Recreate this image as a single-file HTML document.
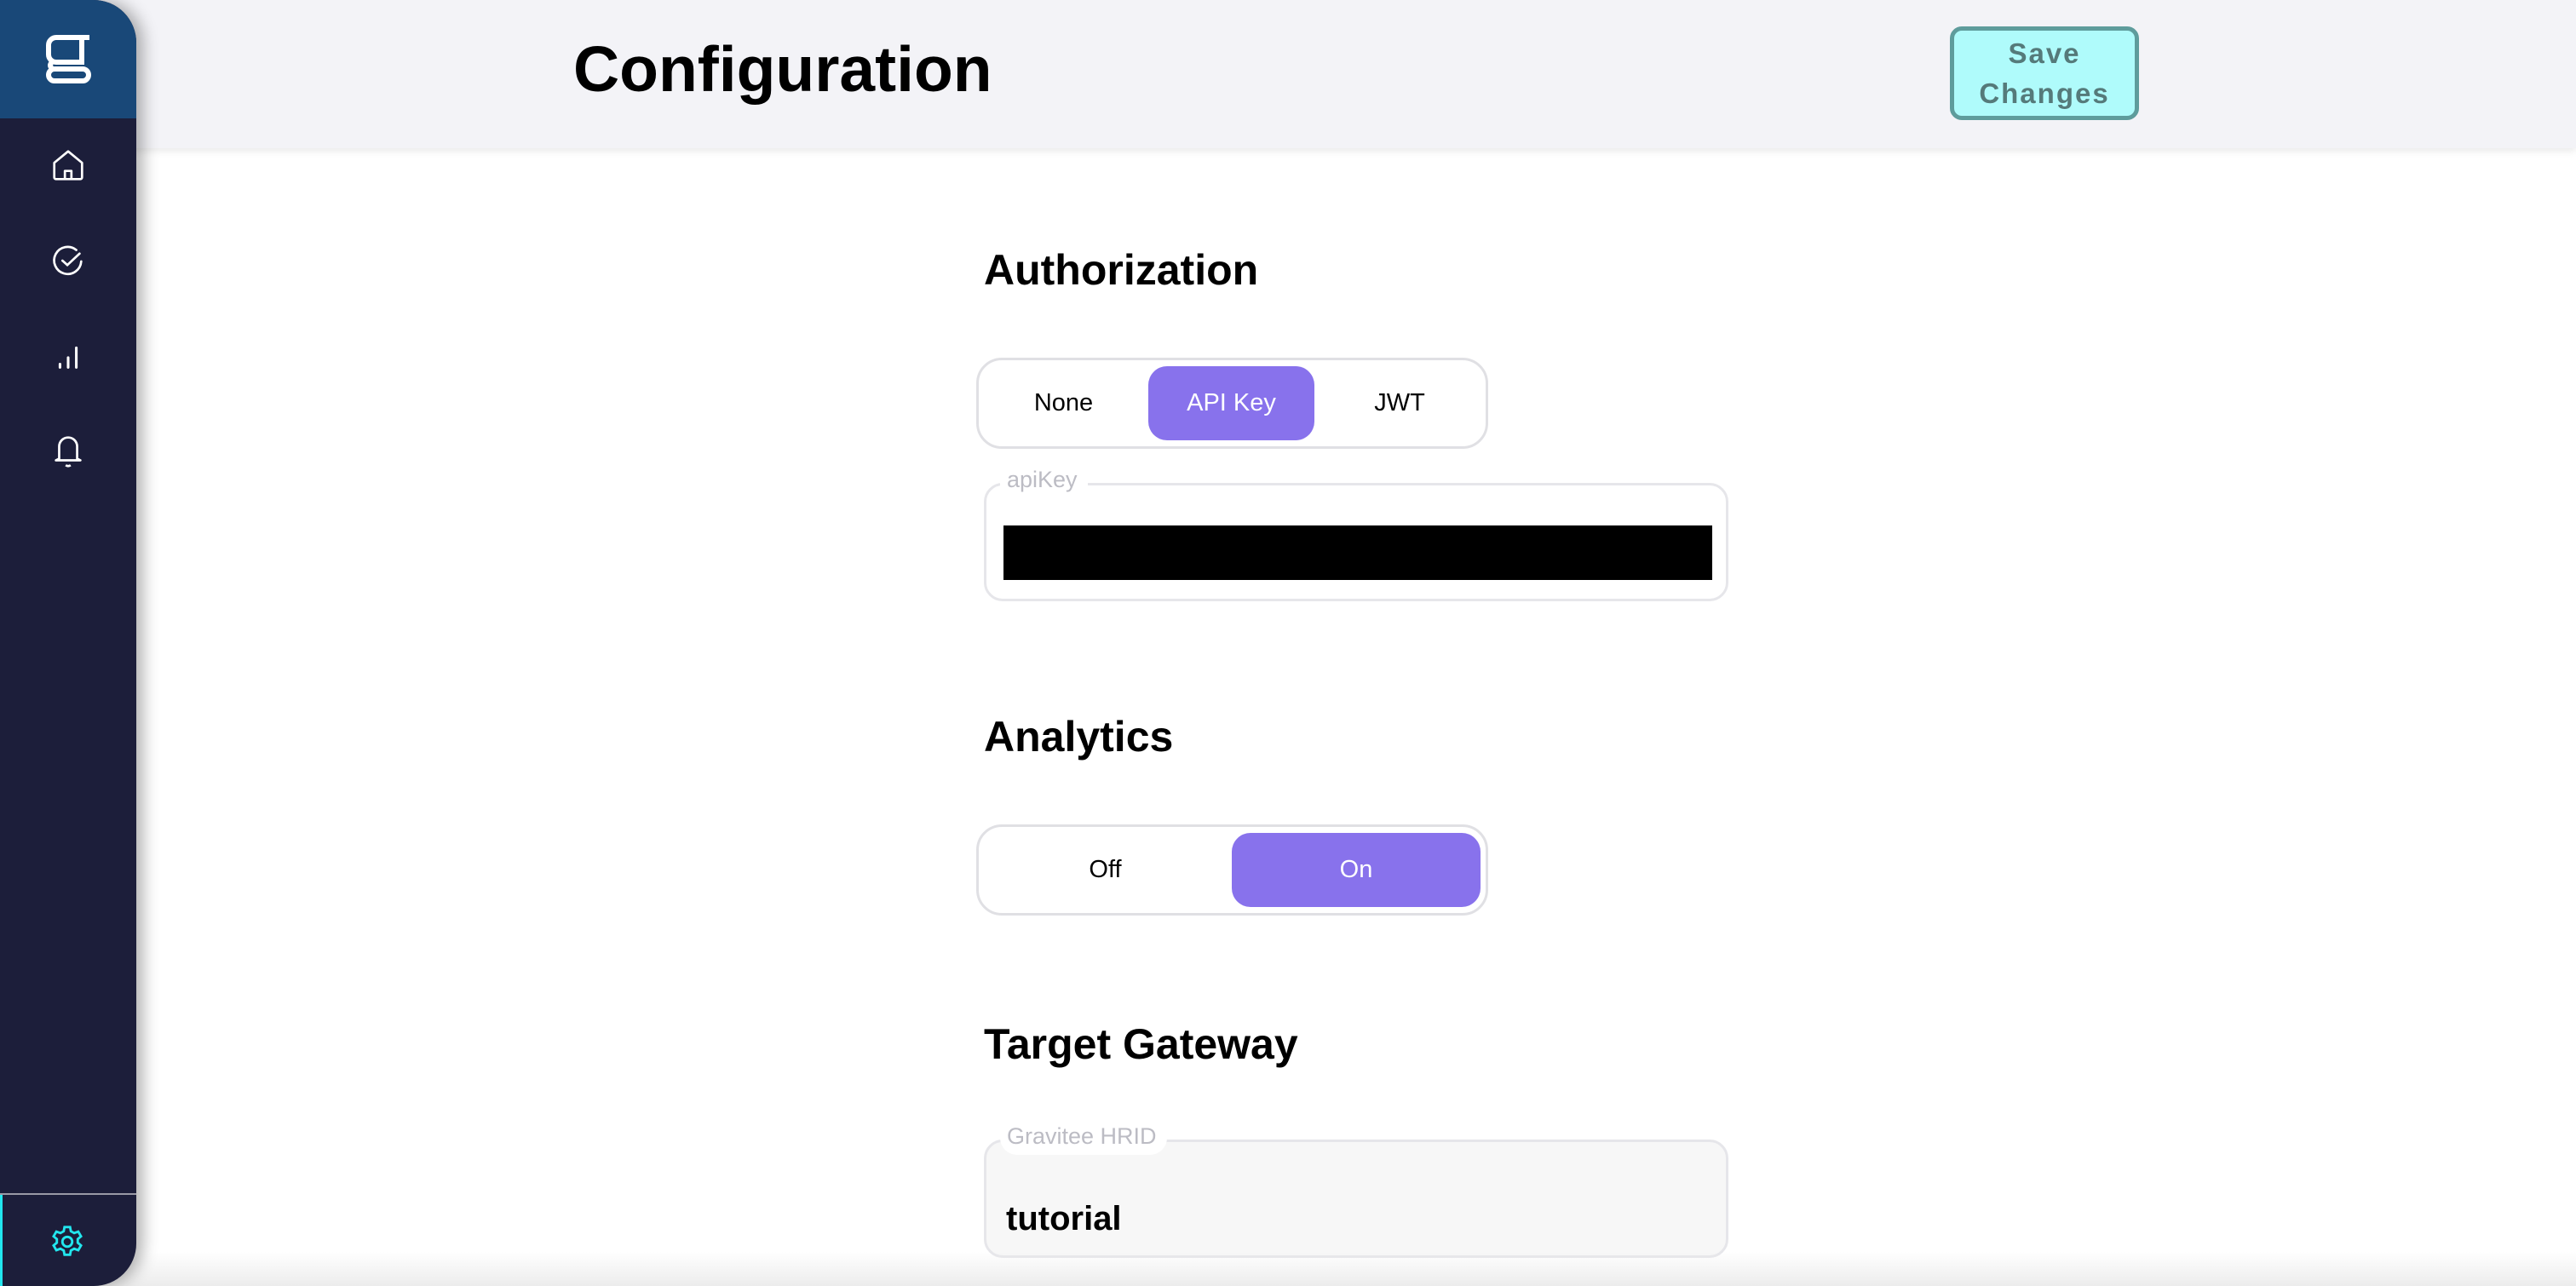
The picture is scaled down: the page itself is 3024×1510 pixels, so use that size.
<!DOCTYPE html>
<html><head><meta charset="utf-8"><style>
*{margin:0;padding:0;box-sizing:border-box}
body{width:3024px;height:1510px;overflow:hidden;background:#fff;font-family:"Liberation Sans",Arial,sans-serif;position:relative}
.header{position:absolute;left:0;top:0;width:3024px;height:174px;background:#f3f3f7;box-shadow:0 4px 8px rgba(0,0,0,0.08)}
.title{position:absolute;left:673px;top:38px;font-size:75px;font-weight:bold;color:#000}
.save{position:absolute;left:2289px;top:31px;width:222px;height:110px;border:5px solid #5e9c9c;border-radius:14px;background:#affbfb;color:#557a7a;font-weight:bold;font-size:33px;letter-spacing:2px;text-align:center;line-height:47px;padding-top:3px}
.side{position:absolute;left:0;top:0;width:160px;height:1510px;background:#1c1e3a;border-radius:0 50px 50px 0;overflow:hidden;box-shadow:8px 0 18px rgba(0,0,0,0.3);z-index:2}
.logo{height:139px;background:#194878;display:flex;align-items:center;justify-content:center}
.ic{position:absolute;left:57px}
.sep{position:absolute;left:0;top:1401px;width:160px;height:2px;background:#9a9aa6}
.act{position:absolute;left:0;top:1403px;width:3px;height:107px;background:#22e6ee}
h2{position:absolute;left:1155px;font-size:50px;font-weight:bold;color:#000}
.grp{position:absolute;left:1146px;width:601px;height:107px;border:3px solid #e0e0e4;border-radius:30px}
.opt{position:absolute;font-size:29px;color:#000;text-align:center}
.sel{background:#8872ec;color:#fff;border-radius:22px}
.field{position:absolute;left:1155px;width:874px;height:139px;border:3px solid #e6e6ea;border-radius:22px}
.lab{position:absolute;left:16px;top:-22px;background:#fff;padding:0 12px 0 8px;font-size:27px;color:#bcbcc4}
.fade{position:absolute;left:0;top:1470px;width:3024px;height:40px;background:linear-gradient(#fff0,#ececec)}
</style></head><body>
<div class="header"><div class="title">Configuration</div><div class="save">Save<br>Changes</div></div>
<div class="side">
 <div class="logo"><svg width="56" height="62" viewBox="0 0 56 62" fill="none" stroke="#fff" stroke-width="6"><path d="M53 5H38M44 5v29H14a9 9 0 0 1-9-9V14a9 9 0 0 1 9-9h30"/><path d="M9 34q-4 4 0 7"/><path d="M12 42h33a7 7 0 0 1 0 14H12a7 7 0 0 1 0-14z"/></svg></div>
 <svg class="ic" style="top:171px" width="46" height="46" viewBox="0 0 24 24" fill="none" stroke="#fff" stroke-width="1.4" stroke-linejoin="round"><path d="M3.5 10.5 12 3.5l8.5 7V19.5a1 1 0 0 1-1 1h-15a1 1 0 0 1-1-1z"/><path d="M10 20.5v-5h4v5"/></svg>
 <svg class="ic" style="top:283px" width="46" height="46" viewBox="0 0 24 24" fill="none" stroke="#fff" stroke-width="1.4" stroke-linecap="round"><path d="M20 12.5a8.3 8.3 0 1 1-3-7"/><path d="M8.5 12l3 2.7 7.5-7"/></svg>
 <svg class="ic" style="top:395px" width="46" height="46" viewBox="0 0 24 24" fill="none" stroke="#fff" stroke-width="1.6" stroke-linecap="round"><path d="M7 19v-2M12 19v-6M17 19V7"/></svg>
 <svg class="ic" style="top:505px" width="46" height="48" viewBox="0 0 24 24" fill="none" stroke="#fff" stroke-width="1.4" stroke-linejoin="round"><path d="M6.5 17V9.5a5.5 5.5 0 0 1 11 0V17l2 1H4.5z"/><path d="M10.5 21q1.5 1 3 0"/></svg>
 <div class="sep"></div><div class="act"></div>
 <svg class="ic" style="top:1435px;left:56px" width="46" height="46" viewBox="0 0 24 24" fill="none" stroke="#22e6ee" stroke-width="1.5"><circle cx="12" cy="12" r="3"/><path d="M10.3 3h3.4l.5 2.6 2 1.1 2.5-.9 1.7 2.9-2 1.7v2.2l2 1.7-1.7 2.9-2.5-.9-2 1.1-.5 2.6h-3.4l-.5-2.6-2-1.1-2.5.9-1.7-2.9 2-1.7v-2.2l-2-1.7 1.7-2.9 2.5.9 2-1.1z"/></svg>
</div>
<h2 style="top:288px">Authorization</h2>
<div class="grp" style="top:420px">
 <div class="opt" style="left:0;width:199px;top:0;line-height:101px">None</div>
 <div class="opt sel" style="left:199px;top:7px;width:195px;height:87px;line-height:87px">API Key</div>
 <div class="opt" style="left:394px;width:200px;top:0;line-height:101px">JWT</div>
</div>
<div class="field" style="top:567px"><div class="lab">apiKey</div><div style="position:absolute;left:20px;top:47px;width:832px;height:64px;background:#000"></div></div>
<h2 style="top:836px">Analytics</h2>
<div class="grp" style="top:968px">
 <div class="opt" style="left:0;width:297px;top:0;line-height:101px">Off</div>
 <div class="opt sel" style="left:297px;top:7px;width:292px;height:87px;line-height:87px">On</div>
</div>
<h2 style="top:1197px">Target Gateway</h2>
<div class="field" style="top:1338px;background:#f7f7f7"><div class="lab" style="border-radius:0 0 20px 20px;padding-bottom:6px">Gravitee HRID</div><div style="position:absolute;left:23px;top:68px;font-size:40px;font-weight:bold;color:#000">tutorial</div></div>
<div class="fade"></div>
</body></html>
